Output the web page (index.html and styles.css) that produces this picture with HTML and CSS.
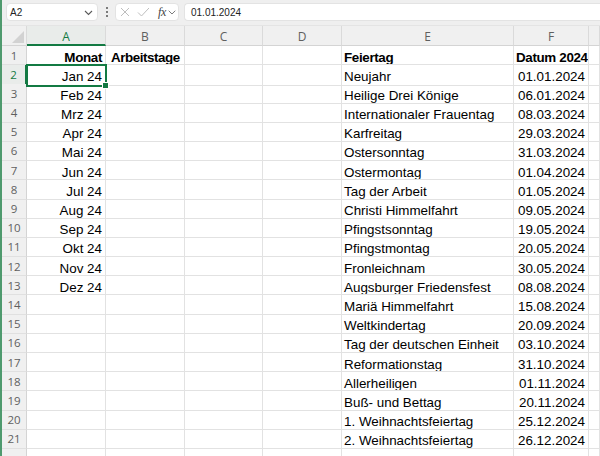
FILE: index.html
```html
<!DOCTYPE html>
<html lang="de">
<head>
<meta charset="utf-8">
<title>Feiertage 2024</title>
<link rel="stylesheet" href="styles.css">
</head>
<body>
<div class="app">
  <div class="toolbar">
    <div class="namebox">
      <span class="ref">A2</span>
      <svg class="chev" width="9" height="6" viewBox="0 0 9 6"><path d="M1 1 L4.5 4.5 L8 1" fill="none" stroke="#5a5a5a" stroke-width="1.1"/></svg>
    </div>
    <div class="dots"><i></i><i></i><i></i></div>
    <div class="fxbox">
      <svg width="10" height="10" viewBox="0 0 10 10"><path d="M1 1 L9 9 M9 1 L1 9" stroke="#bdbdbd" stroke-width="1"/></svg>
      <svg width="13" height="10" viewBox="0 0 13 10"><path d="M1 5.5 L4.5 9 L12 1" fill="none" stroke="#bdbdbd" stroke-width="1"/></svg>
      <span class="fx">fx</span>
      <svg class="chev2" width="8" height="5" viewBox="0 0 8 5"><path d="M0.7 0.7 L4 4 L7.3 0.7" fill="none" stroke="#7a7a7a" stroke-width="1"/></svg>
    </div>
    <div class="formula">01.01.2024</div>
  </div>

  <div class="sheet">
    <div class="row head">
      <div class="c corner"><span class="tri"></span></div>
      <div class="c col sel">A</div>
      <div class="c col">B</div>
      <div class="c col">C</div>
      <div class="c col">D</div>
      <div class="c col">E</div>
      <div class="c col">F</div>
      <div class="c col"></div>
    </div>

    <div class="row"><div class="c rn">1</div><div class="c r b">Monat</div><div class="c b indent">Arbeitstage</div><div class="c"></div><div class="c"></div><div class="c b">Feiertag</div><div class="c r b">Datum 2024</div><div class="c"></div></div>
    <div class="row"><div class="c rn sel">2</div><div class="c r active">Jan 24</div><div class="c"></div><div class="c"></div><div class="c"></div><div class="c">Neujahr</div><div class="c r">01.01.2024</div><div class="c"></div></div>
    <div class="row"><div class="c rn">3</div><div class="c r">Feb 24</div><div class="c"></div><div class="c"></div><div class="c"></div><div class="c">Heilige Drei Könige</div><div class="c r">06.01.2024</div><div class="c"></div></div>
    <div class="row"><div class="c rn">4</div><div class="c r">Mrz 24</div><div class="c"></div><div class="c"></div><div class="c"></div><div class="c">Internationaler Frauentag</div><div class="c r">08.03.2024</div><div class="c"></div></div>
    <div class="row"><div class="c rn">5</div><div class="c r">Apr 24</div><div class="c"></div><div class="c"></div><div class="c"></div><div class="c">Karfreitag</div><div class="c r">29.03.2024</div><div class="c"></div></div>
    <div class="row"><div class="c rn">6</div><div class="c r">Mai 24</div><div class="c"></div><div class="c"></div><div class="c"></div><div class="c">Ostersonntag</div><div class="c r">31.03.2024</div><div class="c"></div></div>
    <div class="row"><div class="c rn">7</div><div class="c r">Jun 24</div><div class="c"></div><div class="c"></div><div class="c"></div><div class="c">Ostermontag</div><div class="c r">01.04.2024</div><div class="c"></div></div>
    <div class="row"><div class="c rn">8</div><div class="c r">Jul 24</div><div class="c"></div><div class="c"></div><div class="c"></div><div class="c">Tag der Arbeit</div><div class="c r">01.05.2024</div><div class="c"></div></div>
    <div class="row"><div class="c rn">9</div><div class="c r">Aug 24</div><div class="c"></div><div class="c"></div><div class="c"></div><div class="c">Christi Himmelfahrt</div><div class="c r">09.05.2024</div><div class="c"></div></div>
    <div class="row"><div class="c rn">10</div><div class="c r">Sep 24</div><div class="c"></div><div class="c"></div><div class="c"></div><div class="c">Pfingstsonntag</div><div class="c r">19.05.2024</div><div class="c"></div></div>
    <div class="row"><div class="c rn">11</div><div class="c r">Okt 24</div><div class="c"></div><div class="c"></div><div class="c"></div><div class="c">Pfingstmontag</div><div class="c r">20.05.2024</div><div class="c"></div></div>
    <div class="row"><div class="c rn">12</div><div class="c r">Nov 24</div><div class="c"></div><div class="c"></div><div class="c"></div><div class="c">Fronleichnam</div><div class="c r">30.05.2024</div><div class="c"></div></div>
    <div class="row"><div class="c rn">13</div><div class="c r">Dez 24</div><div class="c"></div><div class="c"></div><div class="c"></div><div class="c">Augsburger Friedensfest</div><div class="c r">08.08.2024</div><div class="c"></div></div>
    <div class="row"><div class="c rn">14</div><div class="c"></div><div class="c"></div><div class="c"></div><div class="c"></div><div class="c">Mariä Himmelfahrt</div><div class="c r">15.08.2024</div><div class="c"></div></div>
    <div class="row"><div class="c rn">15</div><div class="c"></div><div class="c"></div><div class="c"></div><div class="c"></div><div class="c">Weltkindertag</div><div class="c r">20.09.2024</div><div class="c"></div></div>
    <div class="row"><div class="c rn">16</div><div class="c"></div><div class="c"></div><div class="c"></div><div class="c"></div><div class="c">Tag der deutschen Einheit</div><div class="c r">03.10.2024</div><div class="c"></div></div>
    <div class="row"><div class="c rn">17</div><div class="c"></div><div class="c"></div><div class="c"></div><div class="c"></div><div class="c">Reformationstag</div><div class="c r">31.10.2024</div><div class="c"></div></div>
    <div class="row"><div class="c rn">18</div><div class="c"></div><div class="c"></div><div class="c"></div><div class="c"></div><div class="c">Allerheiligen</div><div class="c r">01.11.2024</div><div class="c"></div></div>
    <div class="row"><div class="c rn">19</div><div class="c"></div><div class="c"></div><div class="c"></div><div class="c"></div><div class="c">Buß- und Bettag</div><div class="c r">20.11.2024</div><div class="c"></div></div>
    <div class="row"><div class="c rn">20</div><div class="c"></div><div class="c"></div><div class="c"></div><div class="c"></div><div class="c">1. Weihnachtsfeiertag</div><div class="c r">25.12.2024</div><div class="c"></div></div>
    <div class="row"><div class="c rn">21</div><div class="c"></div><div class="c"></div><div class="c"></div><div class="c"></div><div class="c">2. Weihnachtsfeiertag</div><div class="c r">26.12.2024</div><div class="c"></div></div>
    <div class="row"><div class="c rn"></div><div class="c"></div><div class="c"></div><div class="c"></div><div class="c"></div><div class="c"></div><div class="c"></div><div class="c"></div></div>
  </div>
</div>
</body>
</html>
```

FILE: styles.css
```css
* { box-sizing: border-box; }
html, body { margin: 0; padding: 0; }
body {
  width: 600px;
  height: 456px;
  overflow: hidden;
  background: #ffffff;
  font-family: "Liberation Sans", Arial, sans-serif;
}
.app {
  border-left: 2px solid #4f9a6e;
  height: 456px;
  overflow: hidden;
}
.toolbar {
  height: 26px;
  background: #efefef;
  display: flex;
  align-items: center;
  padding: 0 0 1px 4px;
  border-bottom: 1px solid #e4e4e4;
}
.namebox {
  width: 92px;
  height: 18px;
  background: #fff;
  border: 1px solid #e3e3e3;
  border-radius: 4px;
  display: flex;
  align-items: center;
  justify-content: space-between;
  padding: 0 4px 0 3px;
  font-size: 10px;
  color: #222;
}
.namebox .chev { margin-top: 1px; }
.dots {
  width: 17px;
  display: flex;
  flex-direction: column;
  align-items: center;
  gap: 1.6px;
}
.dots i {
  width: 2px;
  height: 2px;
  background: #555;
  border-radius: 1px;
}
.fxbox {
  width: 64px;
  height: 18px;
  background: #fff;
  border: 1px solid #e3e3e3;
  border-radius: 4px;
  display: flex;
  align-items: center;
  padding: 0 2px 0 4px;
  gap: 7px;
}
.fxbox .fx {
  font-family: "Liberation Serif", serif;
  font-style: italic;
  font-size: 12px;
  color: #444;
  margin-left: 1px;
  letter-spacing: -0.3px;
}
.fxbox .chev2 { margin-left: -5px; }
.formula {
  flex: 1;
  height: 18px;
  margin-left: 5px;
  background: #fff;
  border: 1px solid #e3e3e3;
  border-right: none;
  border-radius: 4px 0 0 4px;
  font-size: 10px;
  color: #222;
  display: flex;
  align-items: center;
  padding-left: 6px;
}

.sheet { display: flex; flex-direction: column; }
.row {
  display: grid;
  grid-template-columns: 25px 79px 79px 78px 79px 172px 75px 1fr;
  height: 19.2px;
  flex: none;
}
.c {
  border-right: 1px solid #e2e2e2;
  border-bottom: 1px solid #e2e2e2;
  font-size: 13.4px;
  line-height: 17px;
  padding: 2.5px 2px 0 2px;
  white-space: nowrap;
  overflow: hidden;
  color: #000;
  position: relative;
}
.c.r { text-align: right; padding-right: 3px; }
.c.b { font-weight: bold; letter-spacing: -0.35px; }
.c.indent { padding-left: 5px; letter-spacing: -0.45px; }

.head { height: 20px; }
.head .c {
  background: #f0f0f0;
  border-right: 1px solid #dadada;
  border-bottom: 1px solid #d4d4d4;
  font-family: "Open Sans", sans-serif;
  font-size: 12px;
  line-height: 16px;
  padding: 3px 0 0 0;
  text-align: center;
  color: #5f5f5f;
}
.head .c.sel {
  color: #137a43;
  background: #e9ecea;
  border-bottom: 2px solid #137a43;
}
.corner .tri {
  position: absolute;
  right: 2px;
  bottom: 2px;
  width: 0;
  height: 0;
  border-left: 12px solid transparent;
  border-bottom: 12px solid #d2d2d2;
}
.c.rn {
  background: #f0f0f0;
  border-right: 1px solid #d4d4d4;
  border-bottom: 1px solid #e0e0e0;
  font-family: "Open Sans", sans-serif;
  font-size: 11.5px;
  line-height: 16px;
  padding: 1.5px 0 0 0;
  text-align: center;
  color: #5f5f5f;
}
.c.rn.sel {
  color: #137a43;
  background: #e9ecea;
  border-right: 2px solid #137a43;
}
.c.active {
  overflow: visible;
  outline: 2px solid #137a43;
  outline-offset: -1px;
  z-index: 2;
}
.c.active::after {
  content: "";
  position: absolute;
  right: -4px;
  bottom: -4px;
  width: 5px;
  height: 5px;
  background: #137a43;
  border: 1px solid #fff;
}
```
